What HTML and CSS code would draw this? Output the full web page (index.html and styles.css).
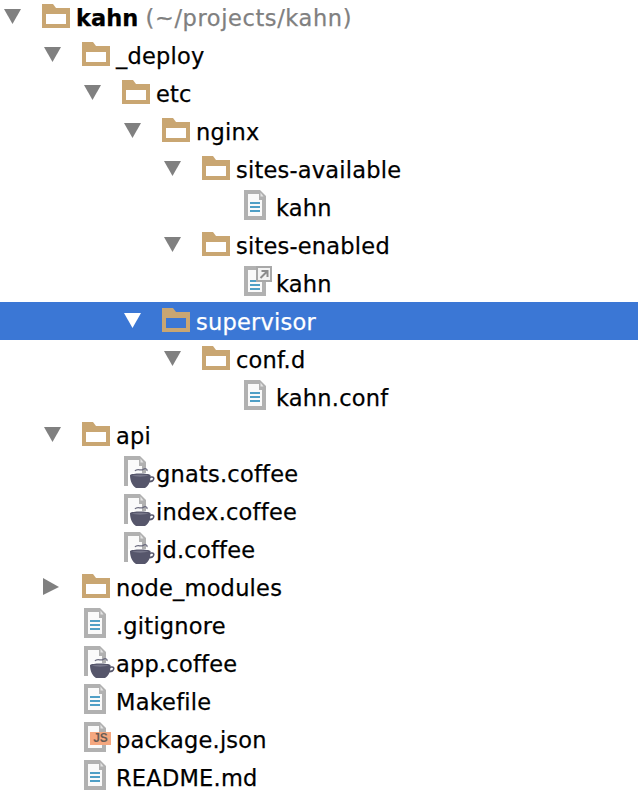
FILE: index.html
```html
<!DOCTYPE html>
<html lang="en">
<head>
<meta charset="utf-8">
<title>Project tree</title>
<link rel="stylesheet" href="styles.css">
</head>
<body>
<svg class="defs" width="0" height="0" aria-hidden="true">
  <symbol id="down" viewBox="0 0 24 38"><path d="M4 11H21L12.5 26Z"/></symbol>
  <symbol id="right" viewBox="0 0 24 38"><path d="M3 10L19 19L3 27Z"/></symbol>
  <symbol id="folder" viewBox="0 0 34 38"><path fill="#c9a672" fill-rule="evenodd" d="M0 6H11L14 10H28V30H0ZM4 16V26H24V16Z"/></symbol>
  <symbol id="sheet" viewBox="0 0 34 38">
    <path fill="#b1b1b1" d="M2 2H18L24 8V32H2Z"/>
    <path fill="#fafafa" d="M6 6H17V12H20V28H6Z"/>
    <path fill="#e4e4e4" d="M18.500 4.500L21.500 8.500H18.500Z"/>
  </symbol>
  <symbol id="lines" viewBox="0 0 34 38"><path fill="#4f9fc6" d="M8 14H18V16H8ZM8 18H18V20H8ZM8 22H18V24H8Z"/></symbol>
  <symbol id="cup" viewBox="0 0 34 38">
    <path fill="#fff" d="M6 19H33V36H6Z"/>
    <path fill="none" stroke="#6a6a7e" stroke-width="1.3" d="M13 17C15 14 19 17 21 15.500C23 14 25.500 14.500 25 17"/>
    <path fill="#56566b" fill-rule="evenodd" d="M8 21C10 19 26 19 28.500 21V22.500C31 21.500 33 23 32.500 25C32 27.500 30 28.500 27.500 28.500C26.500 31 25 33 23 34H14C10.500 32 8 27 8 21ZM28.500 24L28 26.500C30 26.500 31 25.500 31 24.500C31 23.500 29.500 23.500 28.500 24Z"/>
    <path fill="#77778a" d="M10 21.500C13 20.500 23 20.500 26.500 21.500C23 23 13 23 10 21.500Z"/>
  </symbol>
</svg>
<main class="tree">
  <div class="row d0"><svg class="arrow"><use href="#down"/></svg><svg class="icon"><use href="#folder"/></svg><span class="label"><b class="root">kahn</b> <span class="path">(~/projects/kahn)</span></span></div>
  <div class="row d1"><svg class="arrow"><use href="#down"/></svg><svg class="icon"><use href="#folder"/></svg><span class="label">_deploy</span></div>
  <div class="row d2"><svg class="arrow"><use href="#down"/></svg><svg class="icon"><use href="#folder"/></svg><span class="label">etc</span></div>
  <div class="row d3"><svg class="arrow"><use href="#down"/></svg><svg class="icon"><use href="#folder"/></svg><span class="label">nginx</span></div>
  <div class="row d4"><svg class="arrow"><use href="#down"/></svg><svg class="icon"><use href="#folder"/></svg><span class="label">sites-available</span></div>
  <div class="row d5 leaf"><svg class="icon"><use href="#sheet"/><use href="#lines"/></svg><span class="label">kahn</span></div>
  <div class="row d4"><svg class="arrow"><use href="#down"/></svg><svg class="icon"><use href="#folder"/></svg><span class="label">sites-enabled</span></div>
  <div class="row d5 leaf"><svg class="icon" viewBox="0 0 34 38"><use href="#sheet" width="34" height="38"/><use href="#lines" y="2" width="34" height="38"/><path fill="#f3f3f3" stroke="#a8a8a8" stroke-width="2" d="M15 3H29V17H15Z"/><path fill="none" stroke="#8c8c8c" stroke-width="2" d="M18.500 14L25 7.500M19.500 7H25.500V13"/></svg><span class="label">kahn</span></div>
  <div class="row d3 selected"><svg class="arrow"><use href="#down"/></svg><svg class="icon"><use href="#folder"/></svg><span class="label">supervisor</span></div>
  <div class="row d4"><svg class="arrow"><use href="#down"/></svg><svg class="icon"><use href="#folder"/></svg><span class="label">conf.d</span></div>
  <div class="row d5 leaf"><svg class="icon"><use href="#sheet"/><use href="#lines"/></svg><span class="label">kahn.conf</span></div>
  <div class="row d1"><svg class="arrow"><use href="#down"/></svg><svg class="icon"><use href="#folder"/></svg><span class="label">api</span></div>
  <div class="row d2 leaf"><svg class="icon"><use href="#sheet"/><use href="#cup"/></svg><span class="label">gnats.coffee</span></div>
  <div class="row d2 leaf"><svg class="icon"><use href="#sheet"/><use href="#cup"/></svg><span class="label">index.coffee</span></div>
  <div class="row d2 leaf"><svg class="icon"><use href="#sheet"/><use href="#cup"/></svg><span class="label">jd.coffee</span></div>
  <div class="row d1"><svg class="arrow"><use href="#right"/></svg><svg class="icon"><use href="#folder"/></svg><span class="label">node_modules</span></div>
  <div class="row d1 leaf"><svg class="icon"><use href="#sheet"/><use href="#lines"/></svg><span class="label">.gitignore</span></div>
  <div class="row d1 leaf"><svg class="icon"><use href="#sheet"/><use href="#cup"/></svg><span class="label">app.coffee</span></div>
  <div class="row d1 leaf"><svg class="icon"><use href="#sheet"/><use href="#lines"/></svg><span class="label">Makefile</span></div>
  <div class="row d1 leaf"><span class="icon-wrap"><svg class="icon"><use href="#sheet"/></svg><span class="badge">JS</span></span><span class="label">package.json</span></div>
  <div class="row d1 leaf"><svg class="icon"><use href="#sheet"/><use href="#lines"/></svg><span class="label">README.md</span></div>
</main>
</body>
</html>
```
FILE: styles.css
```css
html, body {
  margin: 0;
  padding: 0;
  background: #fff;
}
body {
  width: 638px;
  height: 802px;
  overflow: hidden;
  font-family: "DejaVu Sans", sans-serif;
  font-size: 22.5px;
  color: #000;
}
.defs { position: absolute; }
.tree { margin-top: -2px; }
.row {
  display: flex;
  align-items: center;
  height: 38px;
  white-space: nowrap;
}
.d0 { padding-left: 0; }
.d1 { padding-left: 40px; }
.d2 { padding-left: 80px; }
.d3 { padding-left: 120px; }
.d4 { padding-left: 160px; }
.d5 { padding-left: 200px; }
.leaf.d1 { padding-left: 82px; }
.leaf.d2 { padding-left: 122px; }
.leaf.d5 { padding-left: 242px; }
.arrow {
  width: 24px;
  height: 38px;
  margin-right: 18px;
  fill: #808080;
  flex: none;
}
.icon {
  width: 34px;
  height: 38px;
  flex: none;
  display: block;
}
.icon-wrap {
  position: relative;
  display: block;
  flex: none;
}
.badge {
  position: absolute;
  left: 8px;
  top: 12px;
  width: 21px;
  height: 13px;
  background: #f5a77f;
  color: #6a5c54;
  font-family: "Liberation Sans", sans-serif;
  font-size: 12px;
  font-weight: 700;
  line-height: 13px;
  text-align: center;
}
.label {
  line-height: 38px;
  padding-top: 1px;
  letter-spacing: 0.22px;
  -webkit-text-stroke: 0.25px currentColor;
}
.root { letter-spacing: 0; }
.path {
  color: #808080;
  letter-spacing: 0.6px;
}
.selected {
  background: #3b77d5;
  color: #fff;
}
.selected .arrow { fill: #fff; }
```
